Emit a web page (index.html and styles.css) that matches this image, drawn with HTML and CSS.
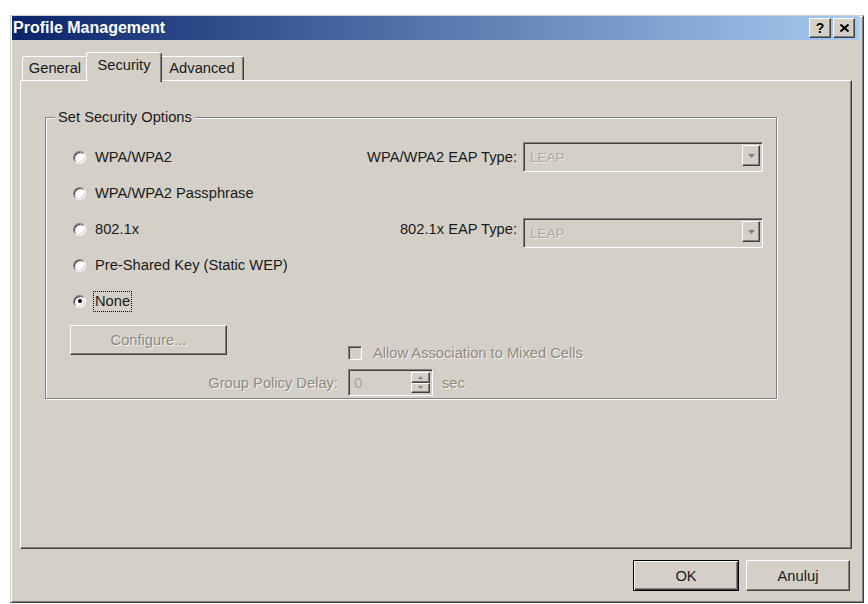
FILE: index.html
```html
<!DOCTYPE html>
<html lang="pl">
<head>
  <meta charset="UTF-8" />
  <title>Profile Management</title>
  <link rel="stylesheet" href="styles.css">
</head>
<body>
  <div class="window">
    <div class="title-bar">
      <span class="title">Profile Management</span>
      <div class="title-buttons">
        <span class="title-btn help">?</span>
        <span class="title-btn">
          <svg width="9" height="8" viewBox="0 0 9 8"><path d="M0.5 0.5 L8.5 7.5 M8.5 0.5 L0.5 7.5" stroke="#000" stroke-width="2"/></svg>
        </span>
      </div>
    </div>

    <div class="dialog-body">
      <!-- Zakładki -->
      <div class="tabs">
        <div class="tab tab-general">General</div>
        <div class="tab tab-security active">Security</div>
        <div class="tab tab-advanced">Advanced</div>
      </div>

      <div class="tab-panel">
        <div class="group">
          <div class="group-title">Set Security Options</div>

          <div class="options">
            <label class="radio-row row1"><span class="radio"></span>WPA/WPA2</label>
            <label class="radio-row row2"><span class="radio"></span>WPA/WPA2 Passphrase</label>
            <label class="radio-row row3"><span class="radio"></span>802.1x</label>
            <label class="radio-row row4"><span class="radio"></span>Pre-Shared Key (Static WEP)</label>
            <label class="radio-row row5"><span class="radio checked"></span><span class="focus">None</span></label>

            <span class="field-label row1">WPA/WPA2 EAP Type:</span>
            <div class="combo row1">
              <span class="combo-value">LEAP</span>
              <span class="combo-arrow"><svg width="7" height="4" viewBox="0 0 7 4"><path d="M0 0 H7 L3.5 4 Z" fill="#808080"/></svg></span>
            </div>

            <span class="field-label row3">802.1x EAP Type:</span>
            <div class="combo row3">
              <span class="combo-value">LEAP</span>
              <span class="combo-arrow"><svg width="7" height="4" viewBox="0 0 7 4"><path d="M0 0 H7 L3.5 4 Z" fill="#808080"/></svg></span>
            </div>
          </div>

          <div class="extras">
            <button class="btn configure" disabled>Configure...</button>
            <label class="check-row"><span class="checkbox"></span><span class="disabled-text">Allow Association to Mixed Cells</span></label>
            <span class="policy-label disabled-text">Group Policy Delay:</span>
            <div class="spin-row">
              <div class="spin">
                <span class="spin-value">0</span>
                <span class="spin-buttons">
                  <span class="spin-btn"><svg width="5" height="3" viewBox="0 0 5 3"><path d="M2.5 0 L5 3 H0 Z" fill="#808080"/></svg></span>
                  <span class="spin-btn"><svg width="5" height="3" viewBox="0 0 5 3"><path d="M0 0 H5 L2.5 3 Z" fill="#808080"/></svg></span>
                </span>
              </div>
              <span class="disabled-text">sec</span>
            </div>
          </div>
        </div>
      </div>

      <!-- Przyciski okna -->
      <div class="actions">
        <button class="btn default">OK</button>
        <button class="btn cancel">Anuluj</button>
      </div>
    </div>
  </div>
</body>
</html>
```

FILE: styles.css
```css
body {
  margin: 0;
  background: #fff;
  font-family: "Liberation Sans", Arial, sans-serif;
  font-size: 14.7px;
  color: #1a1a1a;
}
.window {
  width: 854px;
  height: 588px;
  margin: 15px 0 0 10px;
  box-sizing: border-box;
  background: #d4d0c8;
  border: 1px solid;
  border-color: #d4d0c8 #404040 #404040 #d4d0c8;
  box-shadow: inset 1px 1px #fff, inset -1px -1px #808080;
  padding: 0 1px;
  display: flex;
  flex-direction: column;
}
.title-bar {
  height: 24px;
  margin-right: 3px;
  padding: 0 4px 0 1px;
  background: linear-gradient(to right, #0a246a, #a6caf0);
  display: flex;
  align-items: center;
  justify-content: space-between;
}
.title {
  color: #fff;
  font-weight: bold;
  font-size: 16px;
}
.title-buttons {
  display: flex;
  gap: 2px;
}
.title-btn {
  width: 22px;
  height: 20px;
  box-sizing: border-box;
  background: #d4d0c8;
  border: 1px solid;
  border-color: #fff #404040 #404040 #fff;
  box-shadow: inset -1px -1px #808080;
  display: flex;
  align-items: center;
  justify-content: center;
  font-weight: bold;
  font-size: 14px;
  color: #000;
}
.dialog-body {
  flex: 1;
  padding: 12px 10px 0 8px;
}

/* zakładki */
.tabs {
  display: flex;
  align-items: flex-end;
  height: 28px;
  padding-left: 2px;
}
.tab {
  height: 24px;
  box-sizing: border-box;
  border-top: 1px solid #fff;
  border-left: 1px solid #fff;
  border-right: 1px solid #404040;
  box-shadow: inset -1px 0 #808080;
  border-radius: 3px 3px 0 0;
  text-align: center;
  line-height: 22px;
  background: #d4d0c8;
}
.tab-general { width: 66px; }
.tab-security { width: 72px; }
.tab-advanced { width: 84px; }
.tab.active {
  position: relative;
  z-index: 1;
  height: 30px;
  width: 76px;
  margin: 0 -2px -2px;
  line-height: 24px;
}
.tab-panel {
  height: 469px;
  box-sizing: border-box;
  border: 1px solid;
  border-color: #fff #404040 #404040 #fff;
  box-shadow: inset -1px -1px #808080;
}

/* ramka grupy */
.group {
  width: 732px;
  height: 282px;
  margin: 36px 0 0 24px;
  box-sizing: border-box;
  border: 1px solid #808080;
  box-shadow: inset 1px 1px #fff, 1px 1px #fff;
  padding: 0 13px 0 24px;
}
.group-title {
  width: max-content;
  margin: -9px 0 0 -15px;
  padding: 0 3px;
  line-height: 17px;
  background: #d4d0c8;
}
.options {
  display: grid;
  grid-template-columns: 1fr auto 240px;
  grid-template-rows: repeat(5, 36px);
  margin-top: 13px;
}
.row1 { grid-row: 1; }
.row2 { grid-row: 2; }
.row3 { grid-row: 3; }
.row4 { grid-row: 4; }
.row5 { grid-row: 5; }
.radio-row {
  grid-column: 1;
  display: flex;
  align-items: center;
  gap: 9px;
  padding-left: 3px;
}
.radio {
  width: 13px;
  height: 13px;
  box-sizing: border-box;
  border-radius: 50%;
  background: #fff;
  border: 1px solid;
  border-color: #808080 #fff #fff #808080;
  box-shadow: inset 1px 1px #404040, inset -1px -1px #d4d0c8;
  display: flex;
  align-items: center;
  justify-content: center;
}
.radio.checked::after {
  content: "";
  width: 4px;
  height: 4px;
  border-radius: 50%;
  background: #000;
}
.focus {
  border: 1px dotted #000;
  padding: 1px 1px 2px;
  margin-left: -2px;
}
.field-label {
  grid-column: 2;
  align-self: center;
  text-align: right;
  margin-right: 6px;
}
.combo {
  grid-column: 3;
  align-self: center;
  height: 30px;
  box-sizing: border-box;
  border: 1px solid;
  border-color: #808080 #fff #fff #808080;
  box-shadow: inset 1px 1px #404040, inset -1px -1px #d4d0c8;
  display: flex;
  align-items: center;
  justify-content: space-between;
  padding: 0 2px 0 6px;
}
.combo.row3 { margin-top: 8px; }
.combo-value {
  color: #a9a7a0;
  font-size: 13.5px;
  text-shadow: 1px 1px #eceae4;
}
.combo-arrow {
  width: 18px;
  height: 21px;
  box-sizing: border-box;
  margin-top: -3px;
  border: 1px solid;
  border-color: #fff #404040 #404040 #fff;
  box-shadow: inset -1px -1px #808080;
  display: flex;
  align-items: center;
  justify-content: center;
}

/* dolna część grupy */
.extras {
  display: grid;
  grid-template-columns: 268px 10px 1fr;
  grid-template-rows: 20px 16px 8px 27px;
  margin-top: 6px;
}
.disabled-text {
  color: #8c8a84;
  text-shadow: 1px 1px #f4f3ef;
}
.btn {
  font-family: inherit;
  font-size: 14.7px;
  color: #1a1a1a;
  background: #d4d0c8;
  border: 1px solid;
  border-color: #fff #404040 #404040 #fff;
  box-shadow: inset -1px -1px #808080;
  padding: 0;
}
.configure {
  grid-column: 1;
  grid-row: 1 / span 2;
  width: 157px;
  height: 30px;
  color: #8c8a84;
  text-shadow: 1px 1px #f4f3ef;
}
.check-row {
  grid-column: 3;
  grid-row: 2;
  display: flex;
  align-items: center;
  gap: 11px;
}
.checkbox {
  width: 14px;
  height: 14px;
  box-sizing: border-box;
  border: 1px solid;
  border-color: #808080 #fff #fff #808080;
  box-shadow: inset 1px 1px #404040, inset -1px -1px #d4d0c8;
}
.policy-label {
  grid-column: 1;
  grid-row: 4;
  justify-self: end;
  align-self: center;
}
.spin-row {
  grid-column: 3;
  grid-row: 4;
  display: flex;
  align-items: center;
  gap: 9px;
}
.spin {
  width: 85px;
  height: 27px;
  box-sizing: border-box;
  border: 1px solid;
  border-color: #808080 #fff #fff #808080;
  box-shadow: inset 1px 1px #404040, inset -1px -1px #d4d0c8;
  display: flex;
  align-items: center;
  justify-content: space-between;
  padding: 2px 2px 2px 5px;
}
.spin-value {
  color: #a9a7a0;
}
.spin-buttons {
  display: flex;
  flex-direction: column;
  height: 100%;
}
.spin-btn {
  flex: 1;
  width: 19px;
  box-sizing: border-box;
  border: 1px solid;
  border-color: #fff #404040 #404040 #fff;
  box-shadow: inset -1px -1px #808080;
  display: flex;
  align-items: center;
  justify-content: center;
}

/* OK / Anuluj */
.actions {
  display: flex;
  justify-content: flex-end;
  gap: 7px;
  margin-top: 11px;
  padding-right: 2px;
}
.actions .btn {
  height: 31px;
  width: 104px;
}
.btn.default {
  width: 106px;
  border-color: #000;
  box-shadow: inset 1px 1px #fff, inset -1px -1px #404040, inset -2px -2px #808080;
}
```
